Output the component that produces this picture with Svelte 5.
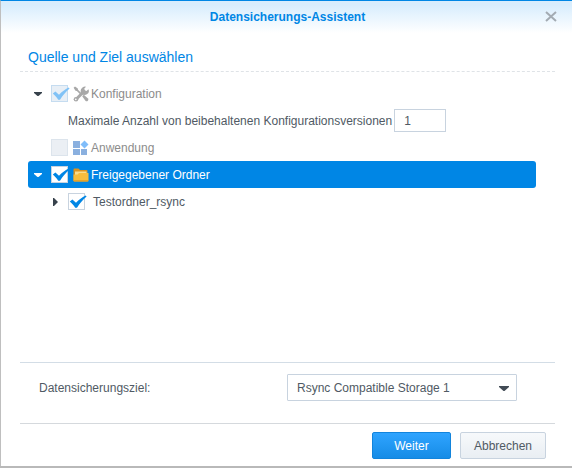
<svelte:options runes={true} />

<script lang="ts">
  type IconName = "tools" | "apps" | "folder";

  interface TreeNode {
    id: string;
    label: string;
    level: number;
    icon?: IconName;
    expandable?: boolean;
    expanded?: boolean;
    checked: boolean;
    disabled?: boolean;
  }

  let nodes = $state<TreeNode[]>([
    { id: "config", label: "Konfiguration", level: 0, icon: "tools", expandable: true, expanded: true, checked: true, disabled: true },
    { id: "apps", label: "Anwendung", level: 0, icon: "apps", checked: false, disabled: true },
    { id: "shared", label: "Freigegebener Ordner", level: 0, icon: "folder", expandable: true, expanded: true, checked: true },
    { id: "testordner", label: "Testordner_rsync", level: 1, expandable: true, expanded: false, checked: true }
  ]);

  let selectedId = $state("shared");
  let versions = $state("1");
  let destination = $state("Rsync Compatible Storage 1");
</script>

<div class="wizard">
  <header class="titlebar">
    <h1>Datensicherungs-Assistent</h1>
    <button class="close" type="button" aria-label="Schließen">
      <svg width="12" height="12" viewBox="0 0 12 12" aria-hidden="true">
        <path d="M1 1 L11 10 M11 1 L1 10" stroke="#a3abb3" stroke-width="2" fill="none" />
      </svg>
    </button>
  </header>

  <main>
    <h2>Quelle und Ziel auswählen</h2>

    <ul class="tree">
      {#each nodes as node (node.id)}
        <li class="row" class:child={node.level === 1} class:selected={node.id === selectedId} class:disabled={node.disabled}>
          {#if node.expandable}
            <button class="toggle" type="button" aria-label={node.label} aria-expanded={node.expanded} onclick={() => (node.expanded = !node.expanded)}>
              <svg width="10" height="10" viewBox="0 0 10 10" aria-hidden="true">
                {#if node.expanded}
                  <path d="M1 3 H9 V4 L5.5 7 H4.5 L1 4 Z" fill="currentColor" />
                {:else}
                  <path d="M3 1 H4 L7.5 4.5 V5.5 L4 9 H3 Z" fill="currentColor" />
                {/if}
              </svg>
            </button>
          {:else}
            <span class="toggle"></span>
          {/if}

          <span class="check">
            <input id={node.id} type="checkbox" bind:checked={node.checked} disabled={node.disabled} />
            {#if node.checked}
              <svg width="19" height="17" viewBox="0 0 19 17" aria-hidden="true">
                <path d="M1.8 8.6 L4.4 6.6 L8 9.8 C11 6.8 14 4.4 17.6 2.6 L18.6 3.6 C14.8 6.8 11.8 10.4 9 14.8 H7.2 C5.8 12.4 4 10.4 1.8 8.6 Z" fill={node.disabled ? "#80c2f6" : "#0086e5"} />
              </svg>
            {/if}
          </span>

          {#if node.icon}
            <svg class="icon" width="16" height="16" viewBox="0 0 16 16" aria-hidden="true">
              {#if node.icon === "tools"}
                <path d="M3.2 13.2 L12 4.4" stroke="#a8a8a8" stroke-width="3" />
                <path d="M10.1 1.1 A3.7 3.7 0 0 1 13 .8 L11.2 2.7 L11.8 4.5 L13.5 5 L15.4 3.2 A4 4 0 1 1 9 2.1 Z" fill="#a8a8a8" />
                <circle cx="3" cy="13.2" r="2.3" fill="#a8a8a8" />
                <circle cx="2.8" cy="13.4" r=".8" fill="#fff" />
                <path d="M.6 1.8 L2 .5 L4.8 2.5 L5 3.8 L9 7.7 L7.8 8.9 L3.9 5 L2.5 4.7 Z" fill="#a8a8a8" />
                <path d="M9.2 10.3 L10.8 8.7 L15 12.4 A1.8 1.8 0 0 1 12.6 15 Z" fill="#a8a8a8" />
              {:else if node.icon === "apps"}
                <path d="M0 1 H7 V8 H0 Z M0 9 H7 V15 H0 Z M8 9 H14 V15 H8 Z" fill="#8ab0df" />
                <path d="M11.5 .5 L15.5 4.5 L11.5 8.5 L7.5 4.5 Z" fill="#80bdfa" />
              {:else}
                <path d="M.5 2.5 Q.5 1.5 1.5 1.5 H5.5 L7 3 H13.5 Q14.5 3 14.5 4 V14 H.5 Z" fill="#dc931e" />
                <path d="M2 4.5 H13.5 V8 H2 Z" fill="#fbdc8a" />
                <path d="M.5 13.5 V7.5 H4.5 L6 6 H15.5 V13 Q15.5 14.5 14.5 14.5 H1.5 Q.5 14.5 .5 13.5 Z" fill="#f7bd3c" />
                <path d="M.5 13.2 H15.5 Q15.5 14.5 14.5 14.5 H1.5 Q.5 14.5 .5 13.2 Z" fill="#e29a21" />
              {/if}
            </svg>
          {/if}

          <label for={node.id}>{node.label}</label>
        </li>

        {#if node.id === "config" && node.expanded}
          <li class="row option">
            <label for="versions">Maximale Anzahl von beibehaltenen Konfigurationsversionen</label>
            <input id="versions" type="text" bind:value={versions} />
          </li>
        {/if}
      {/each}
    </ul>

    <div class="destination">
      <label for="destination">Datensicherungsziel:</label>
      <span class="select">
        <select id="destination" bind:value={destination}>
          <option>Rsync Compatible Storage 1</option>
        </select>
        <svg width="10" height="6" viewBox="0 0 10 6" aria-hidden="true">
          <path d="M0 0 H10 V1 L5.5 5 H4.5 L0 1 Z" fill="#414b55" />
        </svg>
      </span>
    </div>
  </main>

  <footer>
    <button class="btn primary" type="button">Weiter</button>
    <button class="btn" type="button">Abbrechen</button>
  </footer>
</div>

<style>
  :global(body) {
    background: #b9b9b9;
  }

  .wizard {
    box-sizing: border-box;
    min-height: calc(100vh - 2px);
    margin-bottom: 2px;
    display: flex;
    flex-direction: column;
    border-top: 1px solid #0086e5;
    border-left: 1px solid #bfbfbf;
    background: #fff;
    color: #505a64;
    font: 12px/16px "Liberation Sans", Arial, sans-serif;
  }

  button,
  input,
  select {
    box-sizing: border-box;
    margin: 0;
    font: inherit;
    color: inherit;
  }

  .titlebar {
    height: 32px;
    padding: 0 14px 0 18px;
    display: flex;
    align-items: center;
    background: linear-gradient(#d8edfd, #d8edfd 4px, #fff);
  }

  h1 {
    flex: 1;
    margin: 0;
    padding-left: 12px;
    color: #0086e5;
    font-size: 12px;
    line-height: 16px;
    text-align: center;
  }

  .close {
    width: 14px;
    height: 16px;
    padding: 0;
    display: grid;
    place-items: center;
    border: 0;
    background: none;
  }

  main {
    flex: 1;
    margin: 0 17px 0 19px;
    display: flex;
    flex-direction: column;
  }

  h2 {
    margin: 0;
    padding: 14px 8px 4px;
    border-bottom: 1px dashed #dfe3e7;
    color: #0086e5;
    font-size: 14px;
    font-weight: normal;
    line-height: 20px;
  }

  .tree {
    flex: 1;
    margin: 0;
    padding: 8px 19px 0 8px;
    list-style: none;
  }

  .row {
    height: 27px;
    display: flex;
    align-items: center;
    border-radius: 3px;
  }

  .row.child {
    padding-left: 17px;
  }

  .row.option {
    padding-left: 40px;
  }

  .row.disabled label {
    color: #8c8c8c;
  }

  .row.selected {
    background: #0086e5;
    color: #fff;
  }

  .toggle {
    width: 20px;
    height: 16px;
    margin-right: 3px;
    padding: 0;
    display: grid;
    place-items: center;
    border: 0;
    background: none;
  }

  .row:not(.selected) .toggle {
    color: #38424c;
  }

  .check {
    position: relative;
    width: 17px;
    height: 17px;
  }

  .check input {
    width: 17px;
    height: 17px;
    display: block;
    appearance: none;
    border: 1px solid #c8d3df;
    background: #fff;
  }

  .check input:disabled {
    border-color: #dce4ec;
    background: #ebeff4;
  }

  .row.disabled .check input:checked {
    border-color: #c5dcf0;
    background: #e8eff6;
  }

  .check svg {
    position: absolute;
    top: 0;
    left: 0;
    pointer-events: none;
  }

  .icon {
    margin: 0 2px 0 5px;
  }

  .child label {
    margin-left: 8px;
  }

  .option input {
    width: 52px;
    height: 23px;
    margin-left: 2px;
    padding: 0 9px;
    border: 1px solid #c8d3df;
    background: #fff;
  }

  .destination {
    height: 60px;
    padding: 0 38px 0 19px;
    display: flex;
    align-items: center;
    justify-content: space-between;
    border-top: 1px solid #d3dde6;
    border-bottom: 1px solid #d5d9dd;
  }

  .destination label {
    padding-bottom: 10px;
  }

  .select {
    position: relative;
    width: 230px;
    margin-bottom: 11px;
  }

  select {
    width: 100%;
    height: 27px;
    display: block;
    padding: 0 28px 0 9px;
    appearance: none;
    border: 1px solid #c8d3df;
    border-radius: 1px;
    background: #fff;
  }

  .select svg {
    position: absolute;
    top: 12px;
    right: 8px;
    pointer-events: none;
  }

  footer {
    padding: 8px 26px 7px;
    display: flex;
    justify-content: flex-end;
    gap: 9px;
  }

  .btn {
    min-width: 79px;
    height: 27px;
    padding: 0 13px;
    border: 1px solid #c8d3df;
    border-radius: 2px;
    background: linear-gradient(#f7f9fb, #e9eef3);
  }

  .btn.primary {
    border-color: #1284dc;
    background: linear-gradient(#2fa4ff, #168ce6);
    color: #fff;
  }
</style>
